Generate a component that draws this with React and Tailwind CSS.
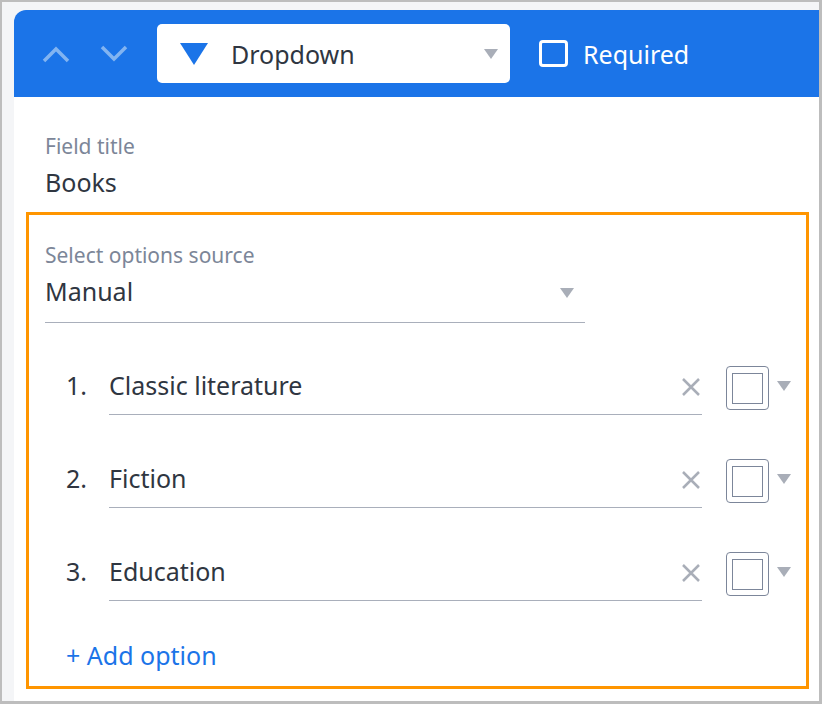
import React from 'react';

const Caret = ({ className }) => (
  <svg width="14" height="10" viewBox="0 0 14 10" className={className}>
    <path d="M0 0 H14 L7 10 Z" fill="#a9aeb8" />
  </svg>
);

const Option = ({ n, label }) => (
  <div className="flex items-center h-[48px]">
    <div className="w-[43px] text-[25px] text-[#2f3641] leading-none pb-[12px]">{n}.</div>
    <div className="w-[593px] h-[48px] flex items-center justify-between border-b border-[#a9afbb] pb-[12px]">
      <span className="text-[25px] leading-[32px] text-[#2f3641]">{label}</span>
      <svg width="20" height="20" viewBox="0 0 20 20" className="mr-[1px] mt-[4px]">
        <path d="M2 2 L18 18 M18 2 L2 18" stroke="#a9aeb8" strokeWidth="2.5" />
      </svg>
    </div>
    <div className="self-start -mt-[1px] ml-[24px] w-[43px] h-[44px] rounded-[4px] border border-[#7c869a] flex items-center justify-center">
      <div className="w-[31px] h-[31px] border border-[#7c869a]" />
    </div>
    <Caret className="ml-[8px] mb-[10px]" />
  </div>
);

export default function App() {
  return (
    <div
      className="w-[822px] h-[704px] bg-[#f4f5f7] border-l-2 border-t-2 border-r-3 border-b-3 border-[#bdbdbd] pl-[12px] pt-[8px]"
      style={{ fontFamily: '"Noto Sans", "Open Sans", sans-serif' }}
    >
      <div className="h-full bg-white rounded-tl-[12px] overflow-hidden flex flex-col">
        <div className="h-[87px] bg-[#1b74e8] flex items-center pl-[28px]">
          <svg width="28" height="18" viewBox="0 0 28 18">
            <path d="M2 16 L14 4 L26 16" stroke="#82b4f1" strokeWidth="3.5" fill="none" />
          </svg>
          <svg width="28" height="18" viewBox="0 0 28 18" className="ml-[30px]">
            <path d="M2 2 L14 14 L26 2" stroke="#82b4f1" strokeWidth="3.5" fill="none" />
          </svg>
          <div className="ml-[29px] w-[353px] h-[59px] bg-white rounded-[5px] flex items-center pl-[23px] pr-[12px]">
            <svg width="28" height="22" viewBox="0 0 28 22">
              <path d="M0 0 H28 L14 22 Z" fill="#1b74e8" />
            </svg>
            <span className="ml-[23px] text-[25px] leading-[32px] text-[#2f3641]">Dropdown</span>
            <Caret className="ml-auto" />
          </div>
          <div className="ml-[29px] w-[29px] h-[27px] rounded-[4px] border-[3px] border-white" />
          <span className="ml-[15px] text-[25px] leading-[32px] text-white">Required</span>
        </div>

        <div className="pl-[31px] pt-[35px]">
          <div className="text-[21px] text-[#7c8698] leading-[28px]">Field title</div>
          <div className="text-[25px] text-[#2f3641] leading-[32px] mt-[6px]">Books</div>
        </div>

        <div className="mt-[14px] ml-[12px] mr-[10px] border-[3px] border-[#ff9500] pl-[16px] pt-[27px] pb-[15px]">
          <div className="text-[21px] text-[#7c8698] leading-[26px]">Select options source</div>
          <div className="w-[540px] h-[55px] flex items-center justify-between border-b border-[#a9afbb] pb-[9px]">
            <span className="text-[25px] leading-[32px] text-[#2f3641]">Manual</span>
            <Caret className="mr-[11px] mt-[4px]" />
          </div>
          <div className="mt-[44px] pl-[21px] flex flex-col gap-[45px]">
            <Option n={1} label="Classic literature" />
            <Option n={2} label="Fiction" />
            <Option n={3} label="Education" />
          </div>
          <div className="mt-[38px] pl-[21px] text-[25px] leading-[32px] text-[#1b74e8]">+ Add option</div>
        </div>
      </div>
    </div>
  );
}
